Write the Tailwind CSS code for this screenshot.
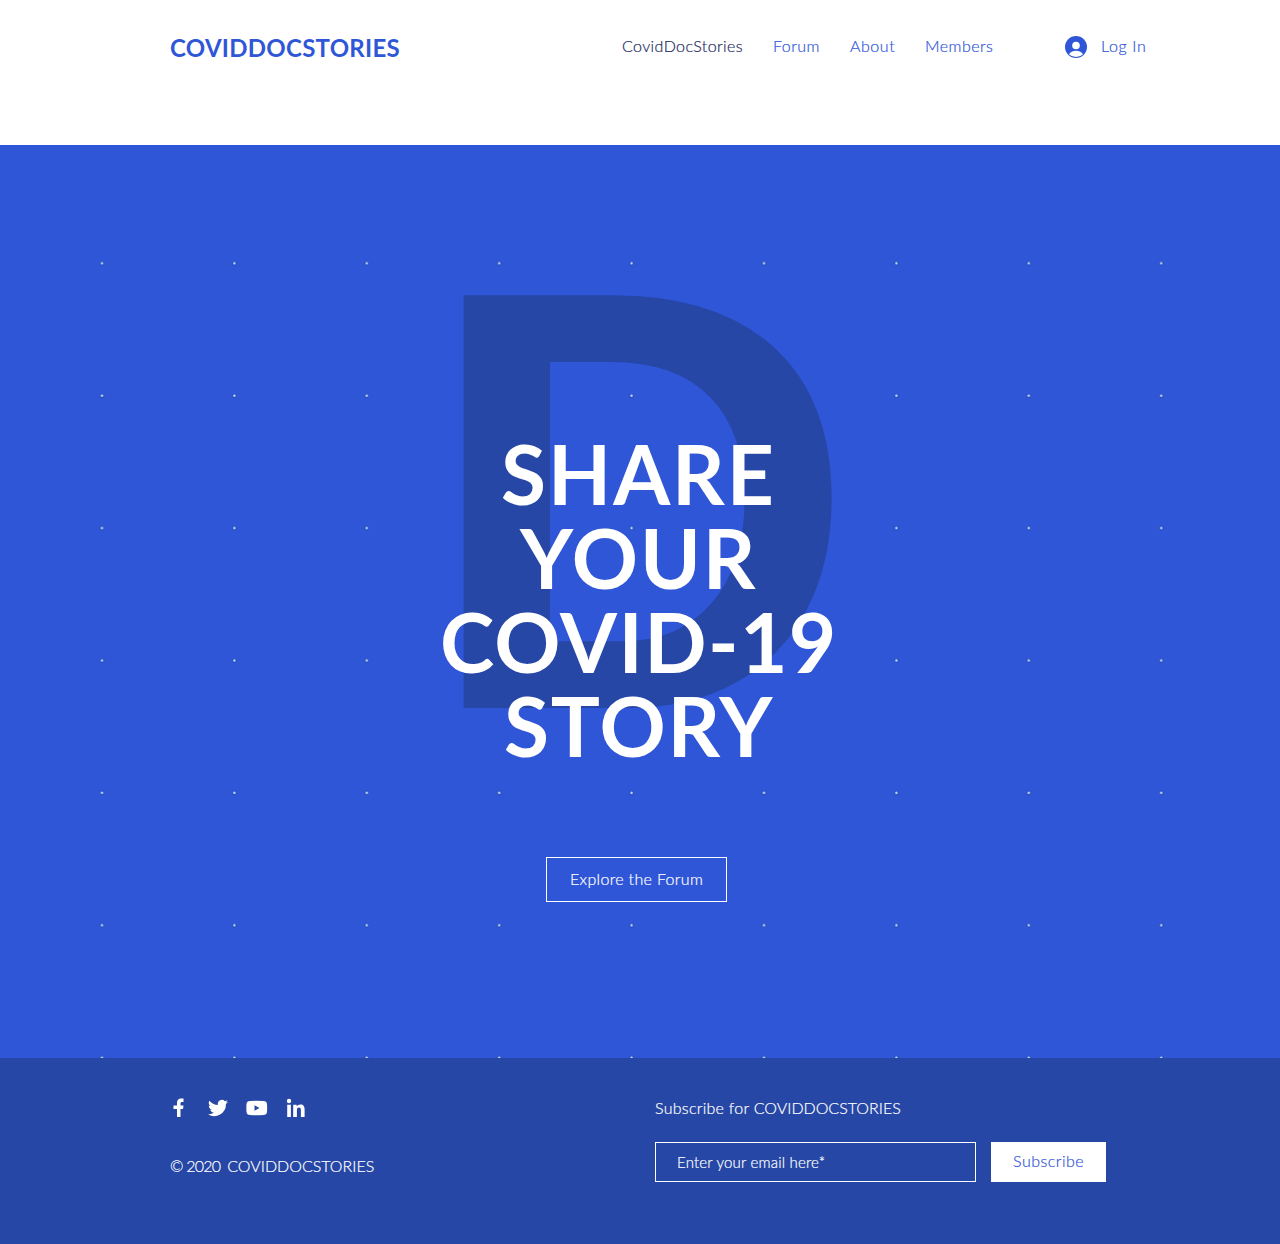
<!DOCTYPE html>
<html lang="en">
<head>
<meta charset="utf-8">
<title>CovidDocStories</title>
<script src="https://cdn.jsdelivr.net/npm/@tailwindcss/browser@4"></script>
</head>
<body class="w-[1280px] bg-white font-['Lato',sans-serif] text-base leading-6 font-light text-[#3056d8] [-webkit-text-stroke:0.2px]">
<header class="flex h-[145px] items-start whitespace-nowrap pt-[34px] pl-[170px]">
  <a class="mt-[2px] w-[452px] text-2xl leading-6 font-bold tracking-[0.28px] [-webkit-text-stroke:0px]">COVIDDOCSTORIES</a>
  <nav class="flex">
    <a class="w-[151px] tracking-[0.4px] text-[#1c2b5c]">CovidDocStories</a>
    <a class="w-[77px] tracking-[0.47px]">Forum</a>
    <a class="w-[75px] tracking-[0.55px]">About</a>
    <a class="w-[140px] tracking-[0.48px]">Members</a>
  </nav>
  <a class="flex items-start">
    <svg class="mt-[2px] mr-[14px] size-[22px]" viewBox="0 0 22 22"><circle cx="11" cy="11" r="11" fill="#3056d8"/><circle cx="11" cy="9.500" r="3.800" fill="#fff"/><path d="M4 18.200C5.800 15.700 8.400 14.800 11 14.800s5.200.9 7 3.400A10 10 0 0 1 4 18.200Z" fill="#fff"/></svg>
    <span class="tracking-[0.65px]">Log In</span>
  </a>
</header>
<main class="relative flex h-[913px] flex-col items-center overflow-hidden bg-[#3056d8]">
  <svg class="absolute inset-0 size-full [-webkit-text-stroke:0px]" aria-hidden="true">
    <defs><pattern id="dots" x="35.8" y="51.8" width="132.400" height="132.400" patternUnits="userSpaceOnUse"><circle cx="66.200" cy="66.500" r="2.300" fill="#2446b8"/><circle cx="66.200" cy="66.500" r="1.250" fill="#c2e4ff"/></pattern></defs>
    <rect width="1280" height="913" fill="url(#dots)"/>
    <text x="423.500" y="563" font-family="Liberation Sans" font-size="600" font-weight="700" fill="#2647a5">D</text>
  </svg>
  <h1 class="relative mt-[286px] flex w-[400px] flex-col pl-px text-[82px] leading-[84px] font-bold whitespace-nowrap text-white [-webkit-text-stroke:0px]">
    <span class="pl-[60px] tracking-[2px]">SHARE</span>
    <span class="pl-[79px] tracking-[2px]">YOUR</span>
    <span class="-ml-px tracking-[1.4px]">COVID-19</span>
    <span class="pl-[63px] tracking-[1.7px]">STORY</span>
  </h1>
  <a class="relative mt-[90px] mr-[7px] flex h-[45px] w-[181px] justify-start border border-white pt-[9px] pl-[23px] tracking-[0.33px] text-white">Explore the Forum</a>
</main>
<footer class="flex h-[186px] bg-[#2647a5] pl-[170px] whitespace-nowrap text-white">
  <div class="w-[485px] pt-[41px]">
    <div class="-ml-px flex h-[17px] items-center gap-[19px]">
      <svg class="size-5" viewBox="0 0 20 20" fill="#fff"><path d="M8 19V11H4.500V7.500H8V5C8 2 9.500.5 12 .5h2.500V4h-1.500c-1.200 0-1.500.5-1.500 1.500v2h3l-.5 3.500h-2.500v8Z"/></svg>
      <svg class="size-5" viewBox="0 0 24 24" fill="#fff"><path d="M24 4.600a10 10 0 0 1-2.800.8 5 5 0 0 0 2.200-2.700 10 10 0 0 1-3.100 1.200 4.900 4.900 0 0 0-8.400 4.500A14 14 0 0 1 1.700 3.200a4.900 4.900 0 0 0 1.500 6.500 5 5 0 0 1-2.200-.6 4.900 4.900 0 0 0 3.900 4.900 5 5 0 0 1-2.200.1 4.900 4.900 0 0 0 4.600 3.400A10 10 0 0 1 0 19.500a14 14 0 0 0 21.500-12.400A10 10 0 0 0 24 4.600Z"/></svg>
      <svg class="size-5 overflow-visible" viewBox="0 0 20 20" fill="#fff"><path fill-rule="evenodd" d="M3 3Q9.700 2.500 16.500 3Q19.700 3.200 20 6Q20.300 10 20 14Q19.700 16.800 16.500 17Q9.700 17.500 3 17Q-.2 16.800-.5 14Q-.8 10-.5 6Q-.2 3.200 3 3ZM7.500 7.200v5.600l5-2.800Z"/></svg>
      <svg class="size-5" viewBox="0 0 20 20" fill="#fff"><circle cx="3" cy="3" r="2.200"/><path d="M1.200 6.800h3.700V19H1.200ZM7.200 6.800h3.500v1.700c.8-1.300 2-2 3.700-2 3.200 0 4.200 2 4.200 5.200V19h-3.700v-6.500c0-1.800-.4-2.900-1.900-2.900-1.600 0-2.100 1.200-2.100 2.900V19H7.200Z"/></svg>
    </div>
    <p class="mt-[38px] whitespace-pre"><span class="tracking-[-0.8px]">© 2020  </span>COVIDDOCSTORIES</p>
  </div>
  <div class="pt-[38px]">
    <p class="whitespace-pre"><span class="tracking-[0.28px]">Subscribe for </span>COVIDDOCSTORIES</p>
    <form class="mt-[22px] flex gap-[15px]">
      <div class="flex h-10 w-[321px] items-center border border-white pl-[21px] text-[15px] tracking-[0.2px]">Enter your email here*</div>
      <div class="h-10 w-[115px] bg-white pt-[7px] pl-[22px] tracking-[0.5px] text-[#3056d8]">Subscribe</div>
    </form>
  </div>
</footer>
</body>
</html>
